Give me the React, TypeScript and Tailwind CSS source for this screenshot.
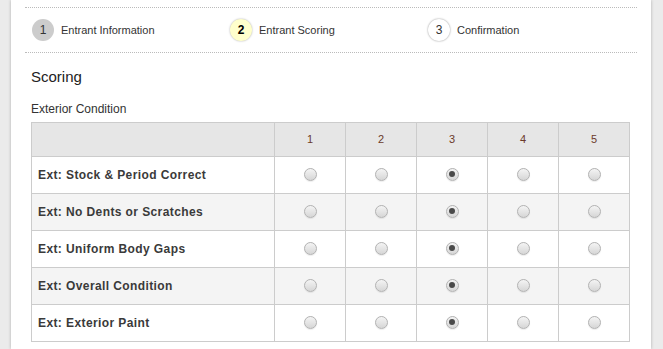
import React from "react";

const rows = [
  "Ext: Stock & Period Correct",
  "Ext: No Dents or Scratches",
  "Ext: Uniform Body Gaps",
  "Ext: Overall Condition",
  "Ext: Exterior Paint",
];

function Radio({ checked }: { checked?: boolean }) {
  return (
    <span className="inline-flex w-[13px] h-[13px] rounded-full border border-[#b3b3b3] bg-gradient-to-b from-[#f4f4f4] to-[#d6d6d6] items-center justify-center shadow-[0_1px_1px_rgba(0,0,0,0.08)]">
      {checked && <span className="w-[6px] h-[6px] rounded-full bg-[#4a4a4a]" />}
    </span>
  );
}

function Step({ n, label, variant }: { n: number; label: string; variant: "done" | "active" | "next" }) {
  const circle =
    variant === "done"
      ? "bg-[#cccccc] text-[#333]"
      : variant === "active"
      ? "bg-[#ffffcc] text-[#000] font-bold shadow-[0_0_2px_rgba(0,0,0,0.35)]"
      : "bg-white text-[#333] shadow-[0_0_2px_rgba(0,0,0,0.45)]";
  return (
    <div className="flex items-center w-[198px]">
      <span className={`w-[22px] h-[22px] rounded-full flex items-center justify-center text-[12px] leading-none ${circle}`}>
        {n}
      </span>
      <span className="ml-[7px] text-[11px] text-[#333]">{label}</span>
    </div>
  );
}

export default function App() {
  return (
    <div
      className="w-[663px] h-[349px] bg-[#ebebeb] flex overflow-hidden"
      style={{ fontFamily: '"Liberation Sans", Arial, sans-serif' }}
    >
      <div className="ml-[11px] w-[640px] h-full bg-white shadow-[0_0_3px_rgba(0,0,0,0.25)] px-[14px] pt-[7px]">
        <div className="border-t border-dotted border-[#bbbbbb]" />
        <div className="h-[44px] flex items-center pl-[7px]">
          <Step n={1} label="Entrant Information" variant="done" />
          <Step n={2} label="Entrant Scoring" variant="active" />
          <Step n={3} label="Confirmation" variant="next" />
        </div>
        <div className="border-t border-dotted border-[#bbbbbb]" />
        <div className="pl-[6px]">
          <div className="mt-[15px] text-[15px] leading-[18px] text-[#222]">Scoring</div>
          <div className="mt-[16px] text-[12px] leading-[14px] text-[#333]">Exterior Condition</div>
          <table className="mt-[6px] border-collapse w-[599px] table-fixed">
            <thead>
              <tr className="h-[34px] bg-[#e6e6e6]">
                <th className="w-[243px] border border-[#cccccc]" />
                {[1, 2, 3, 4, 5].map((n) => (
                  <th key={n} className="w-[71px] border border-[#cccccc] text-[11px] font-normal text-[#6b3a2a]">
                    {n}
                  </th>
                ))}
              </tr>
            </thead>
            <tbody>
              {rows.map((r, i) => (
                <tr key={r} className={`h-[37px] ${i % 2 === 1 ? "bg-[#f4f4f4]" : "bg-white"}`}>
                  <td className="border border-[#cccccc] pl-[6px] text-[12px] font-bold text-[#3a3a3a] tracking-[0.4px]">
                    {r}
                  </td>
                  {[1, 2, 3, 4, 5].map((n) => (
                    <td key={n} className="border border-[#cccccc] text-center align-middle">
                      <div className="flex justify-center -mt-[2px]">
                        <Radio checked={n === 3} />
                      </div>
                    </td>
                  ))}
                </tr>
              ))}
            </tbody>
          </table>
        </div>
      </div>
    </div>
  );
}
